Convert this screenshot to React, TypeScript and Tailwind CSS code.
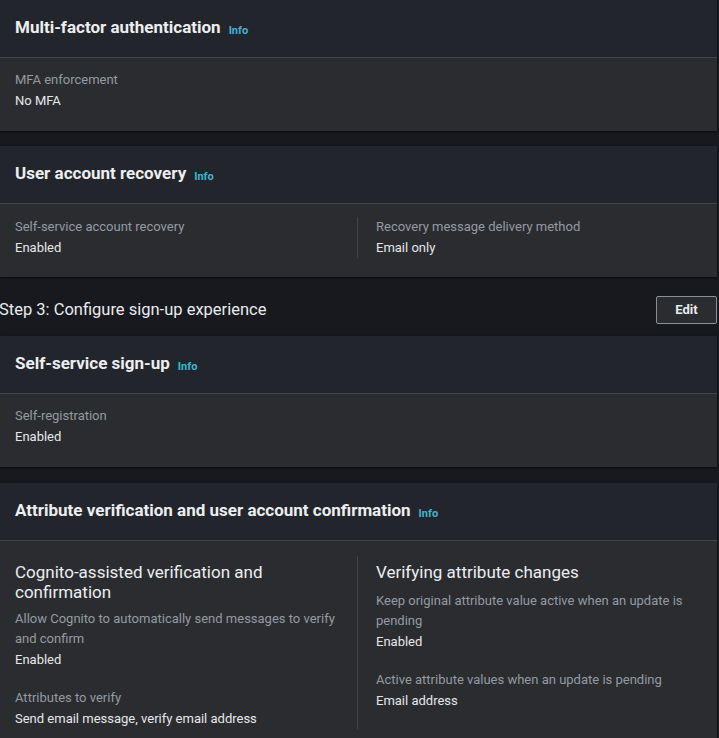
import React from "react";

const font = { fontFamily: "Roboto, 'Liberation Sans', sans-serif" };

function Info() {
  return <span className="ml-2 text-[11px] font-bold text-[#44b3d3] leading-none relative top-[1px]">Info</span>;
}

function Header({ title }: { title: string }) {
  return (
    <div className="h-[58px] px-[15px] pb-[4px] flex items-center bg-[#22252b] border-b border-[#41454c]">
      <h2 className="text-[17px] font-bold text-[#eceef0] leading-[20px] flex items-baseline">
        {title}
        <Info />
      </h2>
    </div>
  );
}

function Field({ label, value }: { label: string; value: string }) {
  return (
    <div>
      <div className="text-[13px] leading-[20px] text-[#959ba2]">{label}</div>
      <div className="text-[13px] leading-[21px] text-[#e6e8ea]">{value}</div>
    </div>
  );
}

function Card({ children }: { children: React.ReactNode }) {
  return <div className="bg-[#2a2c30] shadow-[0_1px_2px_rgba(0,0,0,0.6)]">{children}</div>;
}

export default function App() {
  return (
    <div style={font} className="w-[719px] h-[738px] overflow-hidden bg-[#17191e] pr-[2px]">
      <Card>
        <Header title="Multi-factor authentication" />
        <div className="px-[15px] pt-[12px] pb-[20px]">
          <Field label="MFA enforcement" value="No MFA" />
        </div>
      </Card>

      <div className="h-[15px]" />

      <Card>
        <Header title="User account recovery" />
        <div className="px-[15px] pt-[13px] pb-[19px] grid grid-cols-[342px_1fr]">
          <Field label="Self-service account recovery" value="Enabled" />
          <div className="border-l border-[#3f434a] pl-[18px]">
            <Field label="Recovery message delivery method" value="Email only" />
          </div>
        </div>
      </Card>

      <div className="h-[59px] pt-[6px] flex items-center justify-between">
        <span className="ml-[-1px] text-[16.5px] text-[#e9ebed] leading-[20px]">Step 3: Configure sign-up experience</span>
        <button className="h-[28px] w-[61px] border border-[#8a9097] rounded-[2px] bg-[#2a2c30] text-[13px] font-bold text-[#e9ebed]">
          Edit
        </button>
      </div>

      <Card>
        <Header title="Self-service sign-up" />
        <div className="px-[15px] pt-[12px] pb-[20px]">
          <Field label="Self-registration" value="Enabled" />
        </div>
      </Card>

      <div className="h-[16px]" />

      <Card>
        <Header title="Attribute verification and user account confirmation" />
        <div className="px-[15px] pt-[15px] pb-[20px] grid grid-cols-[342px_1fr]">
          <div className="pr-[10px]">
            <div className="max-w-[300px] pt-[6px] text-[17px] leading-[20px] text-[#eceef0] mb-[7px]">
              Cognito-assisted verification and confirmation
            </div>
            <Field label="Allow Cognito to automatically send messages to verify and confirm" value="Enabled" />
            <div className="mt-[18px]">
              <Field label="Attributes to verify" value="Send email message, verify email address" />
            </div>
          </div>
          <div className="border-l border-[#3f434a] pl-[18px]">
            <div className="pt-[6px] text-[17px] leading-[20px] text-[#eceef0] mb-[9px]">
              Verifying attribute changes
            </div>
            <Field label="Keep original attribute value active when an update is pending" value="Enabled" />
            <div className="mt-[18px]">
              <Field label="Active attribute values when an update is pending" value="Email address" />
            </div>
          </div>
        </div>
      </Card>
    </div>
  );
}
